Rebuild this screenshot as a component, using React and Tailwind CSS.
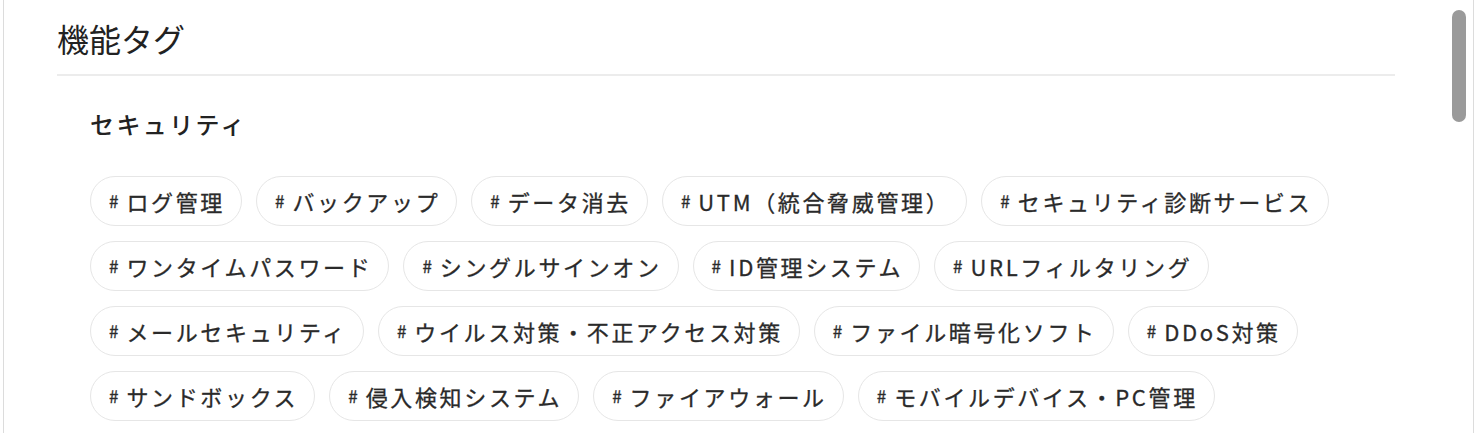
import React from 'react'

const tags = [
  'ログ管理',
  'バックアップ',
  'データ消去',
  'UTM（統合脅威管理）',
  'セキュリティ診断サービス',
  'ワンタイムパスワード',
  'シングルサインオン',
  'ID管理システム',
  'URLフィルタリング',
  'メールセキュリティ',
  'ウイルス対策・不正アクセス対策',
  'ファイル暗号化ソフト',
  'DDoS対策',
  'サンドボックス',
  '侵入検知システム',
  'ファイアウォール',
  'モバイルデバイス・PC管理',
]

function Tag({ label }) {
  return (
    <span className="inline-flex items-center h-[50px] pl-[18px] pr-[16px] rounded-full border border-[#e6e6e6] bg-white text-[#2a2a2a] text-[22px] font-normal tracking-[0.12em] whitespace-nowrap [-webkit-text-stroke:0.3px_#2a2a2a]">
      <span className="text-[17px] mr-[8px] tracking-normal">#</span>
      {label}
    </span>
  )
}

export default function App() {
  return (
    <div
      className="w-[1478px] h-[442px] bg-white overflow-hidden flex"
      style={{ fontFamily: '"Noto Sans CJK JP", "Noto Sans", sans-serif' }}
    >
      <div className="ml-[3px] w-[1471px] h-[433px] border-l border-r border-[#dcdcdc] flex">
        {/* ===== CONTENT ===== */}
        <div className="flex-1 pl-[53px] pr-[50px] pt-[15px]">
          <h2 className="text-[32px] font-normal text-[#222] leading-[46px]">機能タグ</h2>
          <div className="mt-[13px] h-[2px] bg-[#ececec]" />

          <div className="pl-[33px] pt-[31px]">
            <h3 className="text-[24px] font-medium text-[#222] tracking-[0.1em] leading-[34px]">セキュリティ</h3>
            <div className="mt-[35px] flex flex-wrap gap-x-[14px] gap-y-[15px]">
              {tags.map((t) => (
                <Tag key={t} label={t} />
              ))}
            </div>
          </div>
        </div>

        {/* ===== SCROLLBAR ===== */}
        <div className="w-[28px] pt-[10px] flex justify-center">
          <div className="w-[14px] h-[112px] rounded-full bg-[#9a9a9a]" />
        </div>
      </div>
    </div>
  )
}
